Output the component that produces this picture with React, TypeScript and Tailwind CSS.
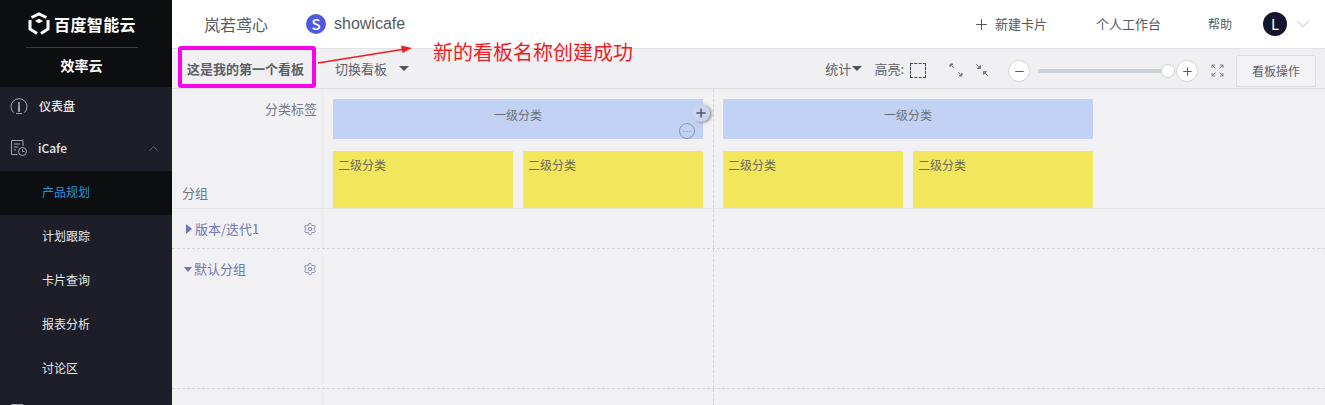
import React from "react";
import { Plus, ChevronUp, ChevronDown, Minus, Settings } from "lucide-react";

const font = { fontFamily: '"Noto Sans CJK SC", "Noto Sans", sans-serif' };

function Logo() {
  return (
    <svg width="22" height="24" viewBox="0 0 22 24" fill="none" stroke="#fff" strokeWidth="3">
      <path d="M3.5 5.5 L11 2 L18.5 5.5" strokeLinejoin="miter" />
      <path d="M2 8 V17 L9 21.5" />
      <path d="M20 8 V17 L13 21.5" />
      <path d="M6.5 9.5 L11 12 L15.5 9.5 V14.5 L12 17 H10 L6.5 14.5 Z" stroke="none" fill="#0d0e10" />
      <path d="M7 9 L11 6.8 L15 9 L11 11.2 Z" stroke="none" fill="#fff" />
    </svg>
  );
}

function Gauge() {
  return (
    <svg width="18" height="18" viewBox="0 0 18 18" fill="none" stroke="#a5a7ae" strokeWidth="1">
      <path d="M3.5 15.5 A8 8 0 1 1 14.5 15.5" />
      <path d="M9 5 L8.4 14.5 H9.6 Z" fill="#a5a7ae" />
      <path d="M6 16.5 H12" />
    </svg>
  );
}

function Doc() {
  return (
    <svg width="18" height="18" viewBox="0 0 18 18" fill="none" stroke="#a5a7ae" strokeWidth="1">
      <path d="M7.5 15.5 H1.5 V1.5 H13 V7" />
      <path d="M4 5 H10 M4 8 H8 M4 11 H6" />
      <circle cx="12.5" cy="12.5" r="4" />
      <path d="M12.5 10.5 V12.5 H14.5" />
    </svg>
  );
}

function Arrows({ inward }: { inward?: boolean }) {
  return (
    <svg width="14" height="14" viewBox="0 0 14 14" fill="#7a7d85" stroke="#7a7d85" strokeWidth="1">
      {inward ? (
        <>
          <path d="M1 1 L5 5" />
          <path d="M2.5 5.5 H5.5 V2.5 Z" />
          <path d="M13 13 L9 9" />
          <path d="M11.5 8.5 H8.5 V11.5 Z" />
        </>
      ) : (
        <>
          <path d="M2 2 L5 5" />
          <path d="M1 1 H4 L1 4 Z" />
          <path d="M9 9 L12 12" />
          <path d="M13 13 H10 L13 10 Z" />
        </>
      )}
    </svg>
  );
}

function Fullscreen() {
  return (
    <svg width="13" height="13" viewBox="0 0 13 13" fill="none" stroke="#7a7d85" strokeWidth="1">
      <path d="M1 4 V1 H4 M1 1 L4.5 4.5" />
      <path d="M9 1 H12 V4 M12 1 L8.5 4.5" />
      <path d="M1 9 V12 H4 M1 12 L4.5 8.5" />
      <path d="M9 12 H12 V9 M12 12 L8.5 8.5" />
    </svg>
  );
}

function Nav({ label, active }: { label: string; active?: boolean }) {
  return (
    <div className={`h-[44px] shrink-0 flex items-center pl-[42px] pb-[2px] text-[12px] ${active ? "bg-[#0d0e10] text-[#2f8fdc]" : "text-[#e8e8ea]"}`}>
      {label}
    </div>
  );
}

function Yellow() {
  return (
    <div className="w-[180px] h-[57px] bg-[#f2e65c] pl-[5px] pt-[5px] text-[12px] leading-[18px] text-[#6b6b60]">二级分类</div>
  );
}

function Group({ first }: { first?: boolean }) {
  return (
    <div className={`w-[391px] shrink-0 h-full pt-[10px] ${first ? "pl-[10px] border-r border-dashed border-[#d4d4d8]" : "pl-[9px]"}`}>
      <div className="relative w-[370px] h-[40px] bg-[#c2d2f4] flex items-center justify-center text-[12px] text-[#6b7078] pb-[8px]">
        一级分类
        {first && (
          <>
            <span className="absolute right-[-7px] top-[5px] w-[18px] h-[18px] rounded-full bg-[#c9d5f0] shadow-[2px_1px_3px_rgba(0,0,0,0.35)] flex items-center justify-center text-[#4b5563]">
              <Plus size={14} strokeWidth={2.5} />
            </span>
            <span className="absolute right-[8px] top-[24px] w-[16px] h-[16px] rounded-full border border-[#8d94a3] flex items-center justify-center text-[9px] leading-none text-[#8d94a3]">…</span>
          </>
        )}
      </div>
      <div className="flex gap-[10px] mt-[12px]">
        <Yellow />
        <Yellow />
      </div>
    </div>
  );
}

function Row({ label, open, h, dashed }: { label?: string; open?: boolean; h: string; dashed: boolean }) {
  return (
    <div className={`flex shrink-0 ${h} ${dashed ? "border-b border-dashed border-[#d4d4d8]" : ""}`}>
      <div className="w-[151px] shrink-0 pl-[12px] pr-[5px] pt-[11px] h-full flex items-start justify-between text-[13px] text-[#7278b0] border-r border-[#ececef]">
        {label && (
          <>
            <span className="flex items-center h-[18px]">
              <span className={open ? "w-0 h-0 border-x-[4.5px] border-x-transparent border-t-[5px] border-t-[#6f76b3] mr-[2px]" : "w-0 h-0 border-y-[5px] border-y-transparent border-l-[6px] border-l-[#6f76b3] mr-[3px] ml-[2px]"} />
              {label}
            </span>
            <Settings size={14} className="text-[#7278b0] mt-[2px]" strokeWidth={1.5} />
          </>
        )}
      </div>
      <div className="w-[391px] border-r border-dashed border-[#d4d4d8]" />
    </div>
  );
}

export default function App() {
  return (
    <div className="relative flex w-[1325px] h-[405px] overflow-hidden bg-[#f1f1f4]" style={font}>
      <aside className="w-[172px] shrink-0 bg-[#1d1e28] flex flex-col overflow-hidden">
        <div className="h-[87px] shrink-0 bg-[#0d0e10] flex flex-col items-center">
          <div className="flex items-center gap-[4px] h-[48px] pl-[2px] text-white text-[16px] font-bold tracking-[0.4px] whitespace-nowrap border-b border-[#353a4c] w-[112px] mr-[32px] ml-[26px] self-start">
            <Logo />
            <span>百度智能云</span>
          </div>
          <div className="text-white font-bold text-[14px] mt-[7px] leading-[20px] mr-[9px]">效率云</div>
        </div>
        <div className="h-[40px] shrink-0 flex items-center text-[12px] text-[#e8e8ea] pl-[10px] pb-[2px] gap-[11px] font-medium">
          <Gauge />
          <span>仪表盘</span>
        </div>
        <div className="h-[44px] shrink-0 flex items-center text-[12px] text-[#e8e8ea] pl-[10px] pr-[11px] pb-[2px] gap-[10px] font-medium">
          <Doc />
          <span className="flex-1">iCafe</span>
          <ChevronUp size={15} className="text-[#8b8d95]" strokeWidth={1} />
        </div>
        <Nav label="产品规划" active />
        <Nav label="计划跟踪" />
        <Nav label="卡片查询" />
        <Nav label="报表分析" />
        <Nav label="讨论区" />
        <div className="pl-[10px] pt-[12px] shrink-0"><Doc /></div>
      </aside>

      <main className="flex-1 flex flex-col min-w-0">
        <header className="h-[49px] shrink-0 bg-white border-b border-[#e3e3e6] flex items-center text-[#555a60]">
          <span className="ml-[32px] text-[16px]">岚若鸢心</span>
          <span className="ml-[38px] w-[20px] h-[20px] rounded-full bg-[#5058e0] text-white text-[15px] flex items-center justify-center font-medium">S</span>
          <span className="ml-[8px] text-[16px]" style={{ fontFamily: '"Liberation Sans", sans-serif' }}>showicafe</span>
          <div className="ml-auto flex items-center text-[13px] text-[#555a60]">
            <Plus size={17} strokeWidth={1.5} className="mr-[5px]" />
            <span>新建卡片</span>
            <span className="ml-[49px]">个人工作台</span>
            <span className="ml-[47px] text-[12px]">帮助</span>
            <span className="ml-[31px] w-[24px] h-[24px] rounded-full bg-[#13152d] text-white text-[15px] flex items-center justify-center">L</span>
            <ChevronDown size={22} strokeWidth={0.8} className="ml-[5px] mr-[11px] text-[#9ca3af]" />
          </div>
        </header>

        <div className="h-[40px] shrink-0 bg-[#f0f0f2] border-b border-[#dcdce0] flex items-center text-[13px] text-[#5c5f66]">
          <span className="ml-[15px] font-bold text-[#5c5f66]">这是我的第一个看板</span>
          <span className="ml-[31px]">切换看板</span>
          <span className="ml-[12px] w-0 h-0 border-x-[5px] border-x-transparent border-t-[5px] border-t-[#50535a]" />
          <span className="ml-auto flex items-center">统计<span className="ml-[1px] w-0 h-0 border-x-[5px] border-x-transparent border-t-[5px] border-t-[#50535a]" /></span>
          <span className="ml-[12px]">高亮:</span>
          <span className="ml-[6px] mt-[3px] w-[16px] h-[15px] border border-dashed border-[#44474d]" />
          <span className="ml-[23px] mt-[3px] flex"><Arrows /></span>
          <span className="ml-[12px] mt-[3px] flex"><Arrows inward /></span>
          <span className="ml-[19px] mt-[5px] w-[22px] h-[22px] rounded-full bg-white border border-[#d5d7dc] flex items-center justify-center text-[#555a60]"><Minus size={13} strokeWidth={2} /></span>
          <span className="ml-[8px] mt-[5px] relative w-[130px] h-[4px] rounded-full bg-[#ccd0d8]">
            <span className="absolute right-[-7px] top-[-5px] w-[14px] h-[14px] rounded-full bg-white border border-[#ccd0d8]" />
          </span>
          <span className="ml-[8px] mt-[5px] w-[22px] h-[22px] rounded-full bg-white border border-[#d5d7dc] flex items-center justify-center text-[#555a60]"><Plus size={13} strokeWidth={2} /></span>
          <span className="ml-[13px] mt-[3px] flex"><Fullscreen /></span>
          <span className="ml-[12px] mr-[9px] mt-[5px] w-[80px] h-[32px] bg-[#f3f3f5] border border-[#dcdce0] rounded-[2px] flex items-center justify-center text-[12px]">看板操作</span>
        </div>

        <div className="h-[120px] shrink-0 flex border-b border-[#e6e6ea]">
          <div className="w-[151px] shrink-0 border-r border-[#ececef] pt-[11px] pb-[6px] flex flex-col justify-between text-[13px] text-[#74777e]">
            <span className="self-end pr-[5px] leading-[18px]">分类标签</span>
            <span className="pl-[10px] leading-[18px]">分组</span>
          </div>
          <Group first />
          <Group />
        </div>
        <Row label="版本/迭代1" h="h-[40px]" dashed />
        <Row label="默认分组" open h="h-[140px]" dashed />
        <Row h="h-[17px]" dashed={false} />
      </main>

      <div className="absolute left-[178px] top-[46px] w-[138px] h-[42px] border-[4px] border-[#f605e8] rounded-[3px]" />
      <svg className="absolute left-[316px] top-[44px]" width="100" height="22" viewBox="0 0 100 22" fill="none">
        <path d="M2 19 L86 5.5" stroke="#ee1c25" strokeWidth="1.6" />
        <path d="M96 4 L85 1.5 L86.5 9 Z" fill="#ee1c25" />
      </svg>
      <div className="absolute left-[433px] top-[39px] text-[20px] leading-[26px] text-[#ee1c25] whitespace-nowrap">新的看板名称创建成功</div>
    </div>
  );
}
